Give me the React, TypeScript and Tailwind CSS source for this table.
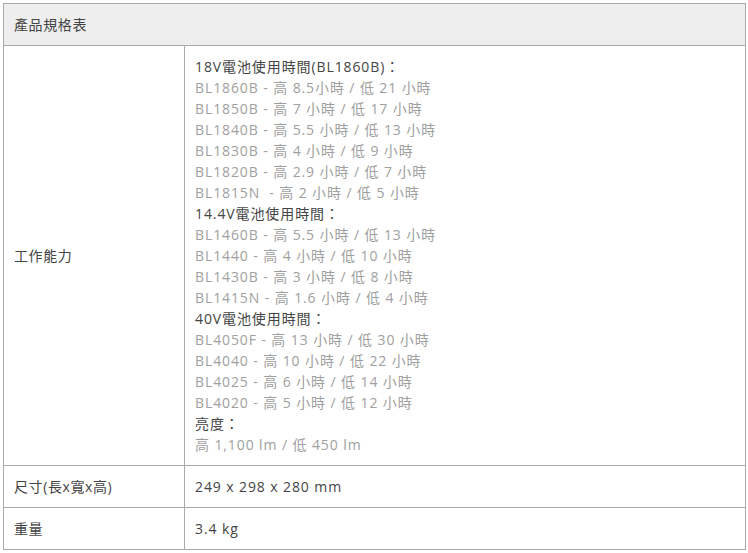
import React from 'react';

type Line = { text: string; dark?: boolean };

const workLines: Line[] = [
  { text: '18V電池使用時間(BL1860B)：', dark: true },
  { text: 'BL1860B - 高 8.5小時 / 低 21 小時' },
  { text: 'BL1850B - 高 7 小時 / 低 17 小時' },
  { text: 'BL1840B - 高 5.5 小時 / 低 13 小時' },
  { text: 'BL1830B - 高 4 小時 / 低 9 小時' },
  { text: 'BL1820B - 高 2.9 小時 / 低 7 小時' },
  { text: 'BL1815N  - 高 2 小時 / 低 5 小時' },
  { text: '14.4V電池使用時間：', dark: true },
  { text: 'BL1460B - 高 5.5 小時 / 低 13 小時' },
  { text: 'BL1440 - 高 4 小時 / 低 10 小時' },
  { text: 'BL1430B - 高 3 小時 / 低 8 小時' },
  { text: 'BL1415N - 高 1.6 小時 / 低 4 小時' },
  { text: '40V電池使用時間：', dark: true },
  { text: 'BL4050F - 高 13 小時 / 低 30 小時' },
  { text: 'BL4040 - 高 10 小時 / 低 22 小時' },
  { text: 'BL4025 - 高 6 小時 / 低 14 小時' },
  { text: 'BL4020 - 高 5 小時 / 低 12 小時' },
  { text: '亮度：', dark: true },
  { text: '高 1,100 lm / 低 450 lm' },
];

const font = { fontFamily: '"Open Sans", "Noto Sans CJK TC", sans-serif' };

export default function App() {
  return (
    <div className="p-[3px] bg-white" style={font}>
      <table className="w-[743px] border-collapse text-[14px] leading-[21px] tracking-[0.9px] text-[#444]">
        <tbody>
          <tr className="h-[42px] bg-[#eeeeee]">
            <td colSpan={2} className="border border-[#aaaaaa] px-[10px] align-middle tracking-[0.6px]">
              產品規格表
            </td>
          </tr>
          <tr>
            <td className="w-[181px] border border-[#aaaaaa] px-[10px] align-middle tracking-[0.6px]">
              工作能力
            </td>
            <td className="border border-[#aaaaaa] px-[10px] py-[10px] align-middle">
              {workLines.map((l, i) => (
                <div key={i} className={`whitespace-pre ${l.dark ? 'text-[#444]' : 'text-[#a0a0a0]'}`}>
                  {l.text}
                </div>
              ))}
            </td>
          </tr>
          <tr className="h-[42px]">
            <td className="border border-[#aaaaaa] px-[10px] align-middle tracking-[0.6px]">尺寸(長x寬x高)</td>
            <td className="border border-[#aaaaaa] px-[10px] align-middle">249 x 298 x 280 mm</td>
          </tr>
          <tr className="h-[42px]">
            <td className="border border-[#aaaaaa] px-[10px] align-middle tracking-[0.6px]">重量</td>
            <td className="border border-[#aaaaaa] px-[10px] align-middle">3.4 kg</td>
          </tr>
        </tbody>
      </table>
    </div>
  );
}
